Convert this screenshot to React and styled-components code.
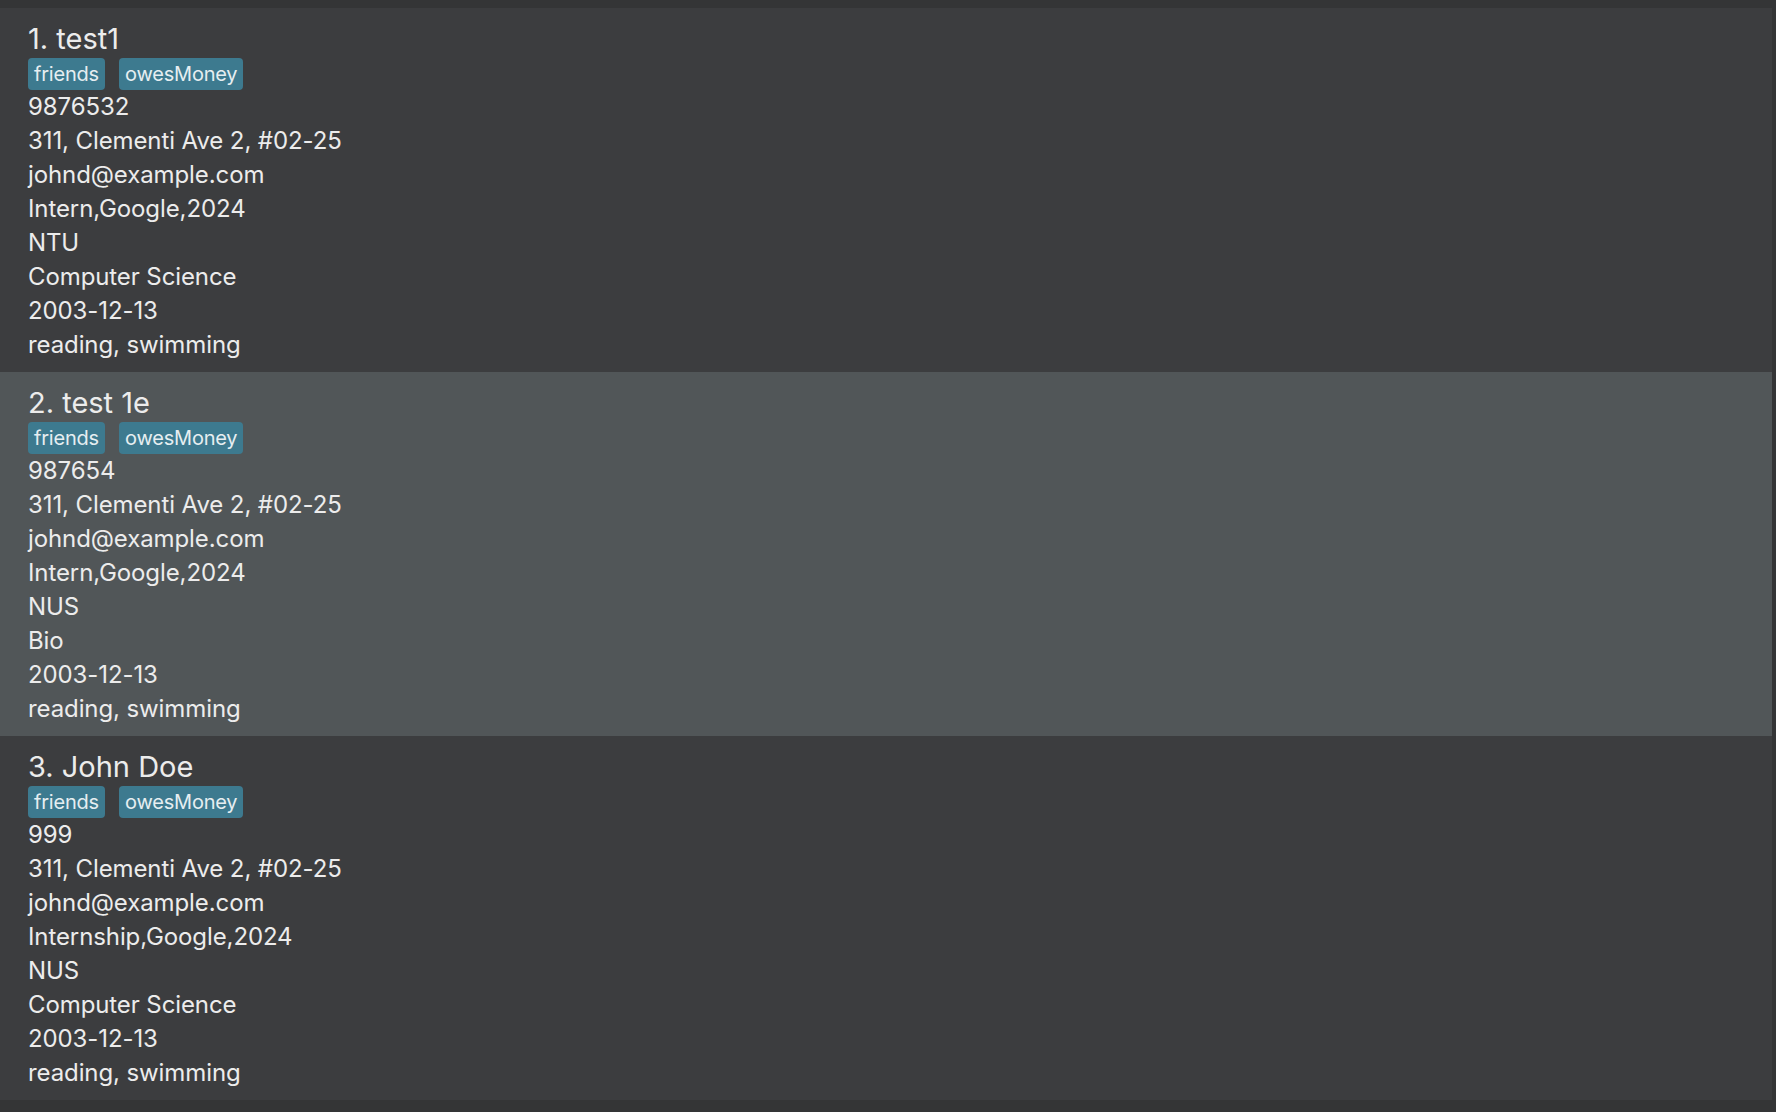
import React from "react";
import styled, {createGlobalStyle} from "styled-components";

const GlobalStyle = createGlobalStyle`
    html, body {
        margin: 0;
        padding: 0;
        background: #343536;
    }
    body {
        font-family: Inter, "Noto Sans", sans-serif;
        -webkit-font-smoothing: antialiased;
    }
`;

const persons = [
    {
        name: "test1",
        tags: ["friends", "owesMoney"],
        fields: ["9876532", "311, Clementi Ave 2, #02-25", "johnd@example.com", "Intern,Google,2024", "NTU", "Computer Science", "2003-12-13", "reading, swimming"],
    },
    {
        name: "test 1e",
        tags: ["friends", "owesMoney"],
        fields: ["987654", "311, Clementi Ave 2, #02-25", "johnd@example.com", "Intern,Google,2024", "NUS", "Bio", "2003-12-13", "reading, swimming"],
    },
    {
        name: "John Doe",
        tags: ["friends", "owesMoney"],
        fields: ["999", "311, Clementi Ave 2, #02-25", "johnd@example.com", "Internship,Google,2024", "NUS", "Computer Science", "2003-12-13", "reading, swimming"],
    },
];

const Page_SC = styled.div`
    width: 1776px;
    height: 1112px;
    box-sizing: border-box;
    padding: 8px 4px 12px 0;
    background: #343536;
    overflow: hidden;
`;

const List_SC = styled.div`
    display: flex;
    flex-direction: column;
`;

const Card_SC = styled.div`
    height: 364px;
    box-sizing: border-box;
    padding: 12px 28px 10px;
    background: ${props => props.selected ? "#515658" : "#3c3d3f"};
    display: flex;
    flex-direction: column;
    color: #ececec;
`;

const Name_SC = styled.div`
    font-size: 29px;
    line-height: 38px;
    height: 38px;
    letter-spacing: 0;
`;

const Tags_SC = styled.div`
    display: flex;
    gap: 14px;
    height: 32px;
`;

const Tag_SC = styled.span`
    background: #3d7a8f;
    color: #e6eef1;
    border-radius: 4px;
    padding: 0 6px;
    font-size: 20px;
    line-height: 32px;
    letter-spacing: -0.2px;
`;

const Field_SC = styled.div`
    font-size: 24px;
    line-height: 34px;
    height: 34px;
    letter-spacing: -0.1px;
`;

const PersonCard = ({index, person, selected}) => (
    <Card_SC selected={selected}>
        <Name_SC>{index}. {person.name}</Name_SC>
        <Tags_SC>
            {person.tags.map(t => <Tag_SC key={t}>{t}</Tag_SC>)}
        </Tags_SC>
        {person.fields.map((f, i) => <Field_SC key={i}>{f}</Field_SC>)}
    </Card_SC>
);

const App = () => (
    <>
        <GlobalStyle />
        <Page_SC>
            <List_SC>
                {persons.map((p, i) => (
                    <PersonCard key={i} index={i + 1} person={p} selected={i === 1} />
                ))}
            </List_SC>
        </Page_SC>
    </>
);

export default App;
